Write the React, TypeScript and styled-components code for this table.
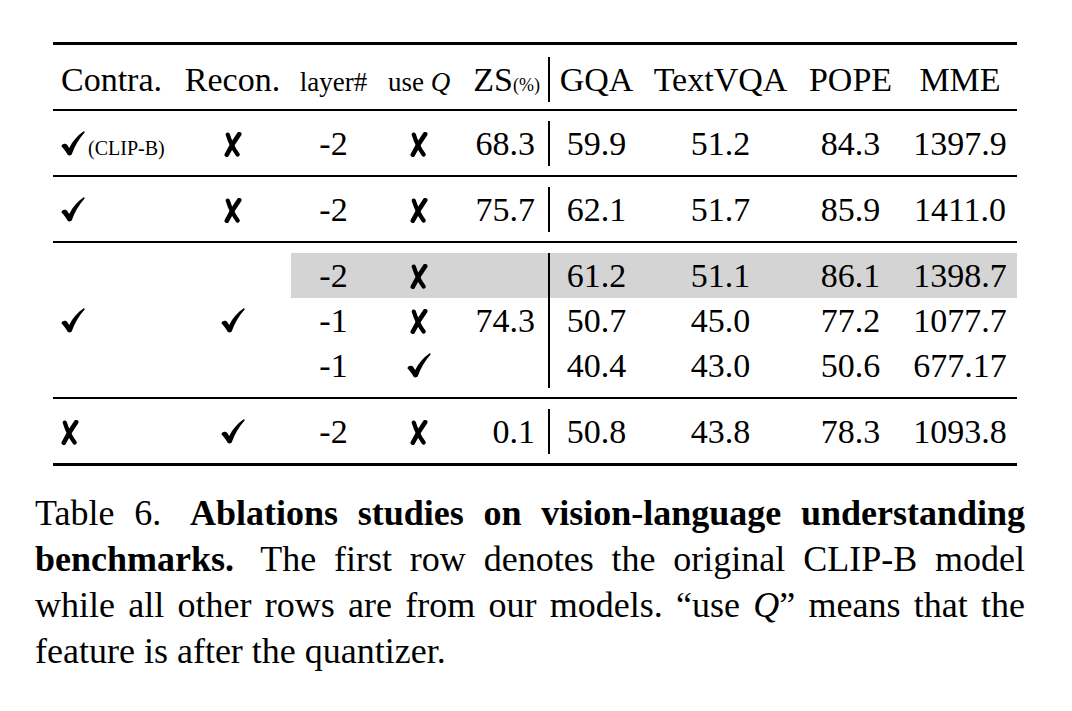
import React from 'react'
import styled, { createGlobalStyle } from 'styled-components'

const GlobalStyle = createGlobalStyle`
  body {
    margin: 0;
    background: #ffffff;
    color: #000000;
    font-family: "Liberation Serif", "Times New Roman", serif;
  }
`

// column widths of the table, left to right
const COLS = '121px 117px 85px 86px 88px 93px 155px 105px 114px'
const ROW = 45

type Align = 'left' | 'center' | 'right'

const PageSC = styled.div`
  padding: 42px 0 40px 0;
`

const TableSC = styled.div`
  width: 964px;
  margin: 0 0 0 53px;
  border-top: 3px solid #000;
  border-bottom: 3px solid #000;
  font-size: 34px;
`

const RowGroup = styled.div<{ $head?: boolean }>`
  display: grid;
  grid-template-columns: ${COLS};
  grid-auto-rows: ${ROW}px;
  padding: ${(p) => (p.$head ? '12px 0 7px 0' : '10px 0 9px 0')};
  border-bottom: 2px solid #000;

  &:last-child {
    border-bottom: none;
  }
`

const Cell = styled.div<{ $align?: Align; $rows?: number; $rule?: boolean; $shade?: boolean }>`
  padding: 0px 8px;
  text-align: ${(p) => p.$align ?? 'center'};
  line-height: ${(p) => ROW * (p.$rows ?? 1)}px;
  grid-row: span ${(p) => p.$rows ?? 1};
  white-space: nowrap;
  border-right: ${(p) => (p.$rule ? '2px solid #000' : 'none')};
  background: ${(p) =>
    p.$shade ? `linear-gradient(#d4d4d4, #d4d4d4) top / 100% ${ROW}px no-repeat` : 'transparent'};
`

const ScoreCell = styled(Cell)`
  padding-right: 13px;
`

const Small = styled.span<{ $size: number }>`
  font-size: ${(p) => p.$size}px;
`

const Cal = styled.span`
  font-style: italic;
`

const Note = styled.span`
  font-size: 20px;
  margin-left: 3px;
`

const MarkSvg = styled.svg<{ $drop?: number }>`
  display: inline-block;
  vertical-align: ${(p) => -(p.$drop ?? 0)}px;
`

const Check = () => (
  <MarkSvg width="24" height="25" viewBox="0 0 24 25" $drop={1}>
    <path
      d="M0.4 15.2 C1.4 12.6 4.8 12 6.4 14.3 L8.2 17 C11.6 10.2 16.4 4.4 22.4 0.5 C23.4 0 24 1 23.4 1.7 C18 7.6 13.6 15.2 10.9 23 C10.2 24.7 7.5 25 6.5 23.5 C4.8 20.6 2.9 17.6 0.4 15.2 Z"
      fill="#000"
    />
  </MarkSvg>
)

const Cross = () => (
  <MarkSvg width="18" height="25" viewBox="0 0 18 25" $drop={2}>
    <g fill="none" stroke="#000" strokeLinecap="round">
      <path d="M3.8 2.6 C5.8 9 8.8 16 13.6 22.6" strokeWidth="4.2" />
      <path d="M15.2 2.2 C10.6 8.6 6.2 16 2.8 22.8" strokeWidth="4.6" />
    </g>
  </MarkSvg>
)

const CaptionSC = styled.div`
  width: 990px;
  margin: 24px 0 0 35px;
  font-size: 36px;
  line-height: 46px;
`

const CaptionLine = styled.div<{ $last?: boolean }>`
  text-align: ${(p) => (p.$last ? 'left' : 'justify')};
  text-align-last: ${(p) => (p.$last ? 'left' : 'justify')};
`

const Lead = styled.span`
  margin-right: 9px;
`

type Mark = 'y' | 'n'
const mark = (m: Mark) => (m === 'y' ? <Check /> : <Cross />)

type Bench = [string, string, string, string]

const DataRow = ({ contra, recon, layer, useQ, zs, bench, note }: {
  contra: Mark; recon: Mark; layer: string; useQ: Mark; zs: string; bench: Bench; note?: string
}) => (
  <RowGroup>
    <Cell $align="left">
      {mark(contra)}
      {note && <Note>{note}</Note>}
    </Cell>
    <Cell>{mark(recon)}</Cell>
    <Cell>{layer}</Cell>
    <Cell>{mark(useQ)}</Cell>
    <ScoreCell $align="right" $rule>{zs}</ScoreCell>
    {bench.map((b, i) => (
      <Cell key={i}>{b}</Cell>
    ))}
  </RowGroup>
)

const subRows: { layer: string; useQ: Mark; bench: Bench; shade?: boolean }[] = [
  { layer: '-2', useQ: 'n', bench: ['61.2', '51.1', '86.1', '1398.7'], shade: true },
  { layer: '-1', useQ: 'n', bench: ['50.7', '45.0', '77.2', '1077.7'] },
  { layer: '-1', useQ: 'y', bench: ['40.4', '43.0', '50.6', '677.17'] },
]

const App = () => {
  return (
    <PageSC>
      <GlobalStyle />
      <TableSC>
        <RowGroup $head>
          <Cell $align="left">Contra.</Cell>
          <Cell>Recon.</Cell>
          <Cell><Small $size={27}>layer#</Small></Cell>
          <Cell><Small $size={27}>use <Cal>Q</Cal></Small></Cell>
          <Cell $align="right" $rule>ZS<Small $size={18}>(%)</Small></Cell>
          <Cell>GQA</Cell>
          <Cell>TextVQA</Cell>
          <Cell>POPE</Cell>
          <Cell>MME</Cell>
        </RowGroup>

        <DataRow contra="y" recon="n" layer="-2" useQ="n" zs="68.3" note="(CLIP-B)"
          bench={['59.9', '51.2', '84.3', '1397.9']} />
        <DataRow contra="y" recon="n" layer="-2" useQ="n" zs="75.7"
          bench={['62.1', '51.7', '85.9', '1411.0']} />

        <RowGroup>
          <Cell $align="left" $rows={3}><Check /></Cell>
          <Cell $rows={3}><Check /></Cell>
          {subRows.map((r, i) => (
            <React.Fragment key={i}>
              <Cell $shade={r.shade}>{r.layer}</Cell>
              <Cell $shade={r.shade}>{mark(r.useQ)}</Cell>
              {i === 0 && <ScoreCell $align="right" $rows={3} $rule $shade>74.3</ScoreCell>}
              {r.bench.map((b, j) => (
                <Cell key={j} $shade={r.shade}>{b}</Cell>
              ))}
            </React.Fragment>
          ))}
        </RowGroup>

        <DataRow contra="n" recon="y" layer="-2" useQ="n" zs="0.1"
          bench={['50.8', '43.8', '78.3', '1093.8']} />
      </TableSC>

      <CaptionSC>
        <CaptionLine>
          <Lead>Table 6.</Lead> <b>Ablations studies on vision-language understanding</b>
        </CaptionLine>
        <CaptionLine>
          <Lead><b>benchmarks.</b></Lead> The first row denotes the original CLIP-B model
        </CaptionLine>
        <CaptionLine>
          while all other rows are from our models. “use <Cal>Q</Cal>” means that the
        </CaptionLine>
        <CaptionLine $last>feature is after the quantizer.</CaptionLine>
      </CaptionSC>
    </PageSC>
  )
}

export default App
